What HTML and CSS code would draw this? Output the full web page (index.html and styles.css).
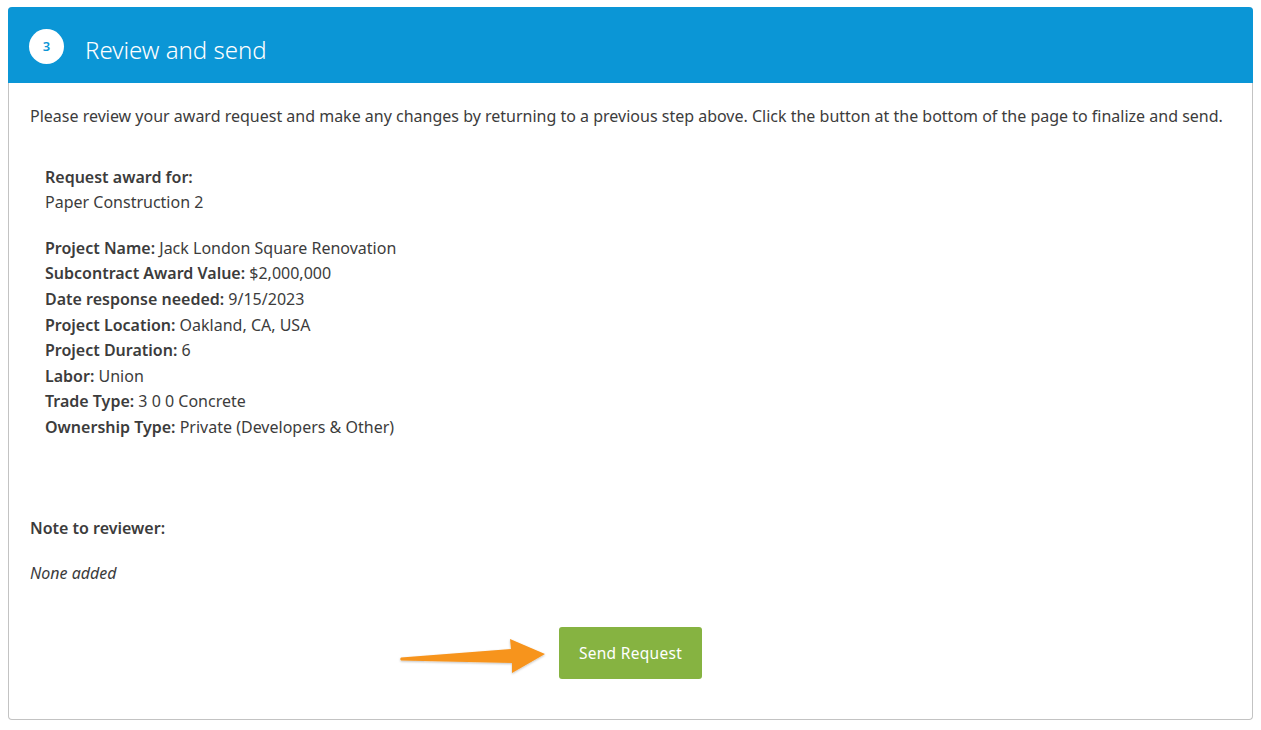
FILE: index.html
```html
<!DOCTYPE html>
<html lang="en">
<head>
    <meta charset="UTF-8">
    <meta name="viewport" content="width=device-width, initial-scale=1.0">
    <title>Review and send</title>
    <link rel="stylesheet" href="styles.css">
</head>
<body>
    <div class="card">
        <div class="card-header">
            <span class="step">3</span>
            <h2>Review and send</h2>
        </div>
        <div class="card-body">
            <p class="intro">Please review your award request and make any changes by returning to a previous step above. Click the button at the bottom of the page to finalize and send.</p>

            <div class="summary">
                <div class="award-for">
                    <div class="label">Request award for:</div>
                    <div>Paper Construction 2</div>
                </div>
                <ul class="details">
                    <li><span class="label">Project Name:</span> Jack London Square Renovation</li>
                    <li><span class="label">Subcontract Award Value:</span> $2,000,000</li>
                    <li><span class="label">Date response needed:</span> 9/15/2023</li>
                    <li><span class="label">Project Location:</span> Oakland, CA, USA</li>
                    <li><span class="label">Project Duration:</span> 6</li>
                    <li><span class="label">Labor:</span> Union</li>
                    <li><span class="label">Trade Type:</span> 3 0 0 Concrete</li>
                    <li><span class="label">Ownership Type:</span> Private (Developers &amp; Other)</li>
                </ul>
            </div>

            <div class="note">
                <div class="label">Note to reviewer:</div>
                <div class="note-text">None added</div>
            </div>

            <div class="actions">
                <div class="send-wrap">
                    <svg class="arrow" width="160" height="50" viewBox="0 0 160 50">
                        <defs>
                            <filter id="sh" x="-10%" y="-30%" width="120%" height="160%">
                                <feDropShadow dx="0" dy="1" stdDeviation="1" flood-color="#000" flood-opacity="0.25"/>
                            </filter>
                        </defs>
                        <path d="M6 25.6 L116 17 L115 7 L150 22 L117 41 L117 31 L6 28.6 Q4.5 27.1 6 25.6 Z" fill="#f7941d" filter="url(#sh)"/>
                    </svg>
                    <button class="send">Send Request</button>
                </div>
            </div>
        </div>
    </div>
</body>
</html>
```

FILE: styles.css
```css
body {
    margin: 7px 8px;
    font-family: "Noto Sans", "Open Sans", sans-serif;
    color: #3c3c3c;
    background-color: #fff;
}

.card {
    border: 1px solid #c3c3c3;
    border-top: none;
    border-radius: 4px;
    height: 713px;
    box-sizing: border-box;
}

.card-header {
    display: flex;
    align-items: center;
    gap: 22px;
    height: 76px;
    padding: 2px 21px 0 21px;
    margin: 0 -1px;
    box-sizing: border-box;
    background-color: #0b96d6;
    border-radius: 4px 4px 0 0;
    color: #fff;
}

.step {
    display: flex;
    align-items: center;
    justify-content: center;
    width: 35px;
    height: 35px;
    border-radius: 50%;
    background-color: #fff;
    color: #0b96d6;
    font-size: 13px;
    font-weight: 600;
}

.card-header h2 {
    margin: 6px 0 0 -1px;
    font-size: 24px;
    font-weight: 300;
}

.card-body {
    padding: 21px 21px 0 21px;
    font-size: 16px;
    line-height: 25.6px;
}

.intro {
    margin: 0 0 35px 0;
}

.summary {
    padding-left: 15px;
}

.award-for {
    margin-bottom: 20px;
}

.details {
    list-style: none;
    margin: 0;
    padding: 0;
}

.label {
    font-weight: 600;
}

.note {
    margin-top: 75px;
}

.note-text {
    margin-top: 20px;
    font-style: italic;
}

.actions {
    display: flex;
    justify-content: center;
    margin-top: 40px;
}

.send-wrap {
    position: relative;
}

.arrow {
    position: absolute;
    left: -164px;
    top: 5px;
}

.send {
    width: 143px;
    height: 52px;
    border: none;
    border-radius: 3px;
    background-color: #86b341;
    color: #fff;
    font-family: inherit;
    font-size: 15.5px;
    letter-spacing: 0.3px;
    cursor: pointer;
}
```
